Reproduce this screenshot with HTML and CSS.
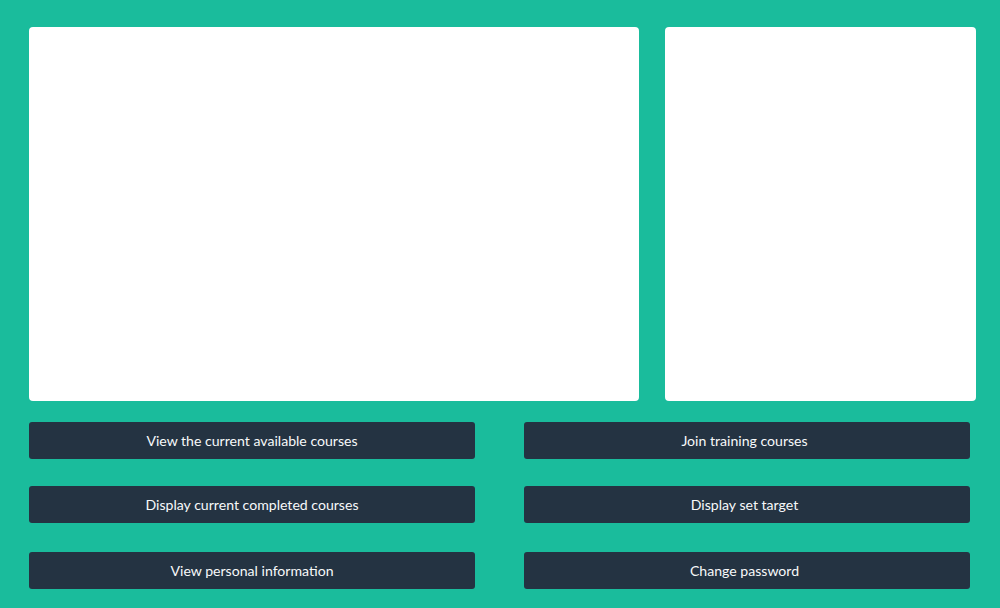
FILE: index.html
```html
<!DOCTYPE html>
<html lang="en">
<head>
<meta charset="utf-8">
<title>Dashboard</title>
<link rel="stylesheet" href="styles.css">
</head>
<body>
<div class="page">
  <div class="panels">
    <div class="panel panel-main"></div>
    <div class="panel panel-side"></div>
  </div>
  <div class="actions">
    <div class="row">
      <button class="btn">View the current available courses</button>
      <button class="btn btn-right">Join training courses</button>
    </div>
    <div class="row">
      <button class="btn">Display current completed courses</button>
      <button class="btn btn-right">Display set target</button>
    </div>
    <div class="row row-last">
      <button class="btn">View personal information</button>
      <button class="btn btn-right">Change password</button>
    </div>
  </div>
</div>
</body>
</html>
```
FILE: styles.css
```css
html, body {
  margin: 0;
  padding: 0;
  background: #1abc9c;
  font-family: Lato, "Liberation Sans", sans-serif;
}
.page {
  width: 1000px;
  height: 608px;
  box-sizing: border-box;
  padding: 27px 24px 0 29px;
}
.panels {
  display: flex;
  gap: 26px;
  height: 374px;
}
.panel {
  background: #ffffff;
  border-radius: 4px;
}
.panel-main {
  width: 610px;
}
.panel-side {
  width: 311px;
}
.actions {
  margin-top: 21px;
  display: flex;
  flex-direction: column;
  gap: 27px;
}
.row {
  display: flex;
  gap: 49px;
}
.row-last {
  margin-top: 2px;
}
.btn {
  width: 446px;
  height: 37px;
  border: 0;
  border-radius: 3px;
  background: #243342;
  color: #f7f9fa;
  font-family: Lato, "Liberation Sans", sans-serif;
  font-size: 14.1px;
  padding: 0;
  text-align: center;
}
.btn-right {
  padding-right: 5px;
}
```
